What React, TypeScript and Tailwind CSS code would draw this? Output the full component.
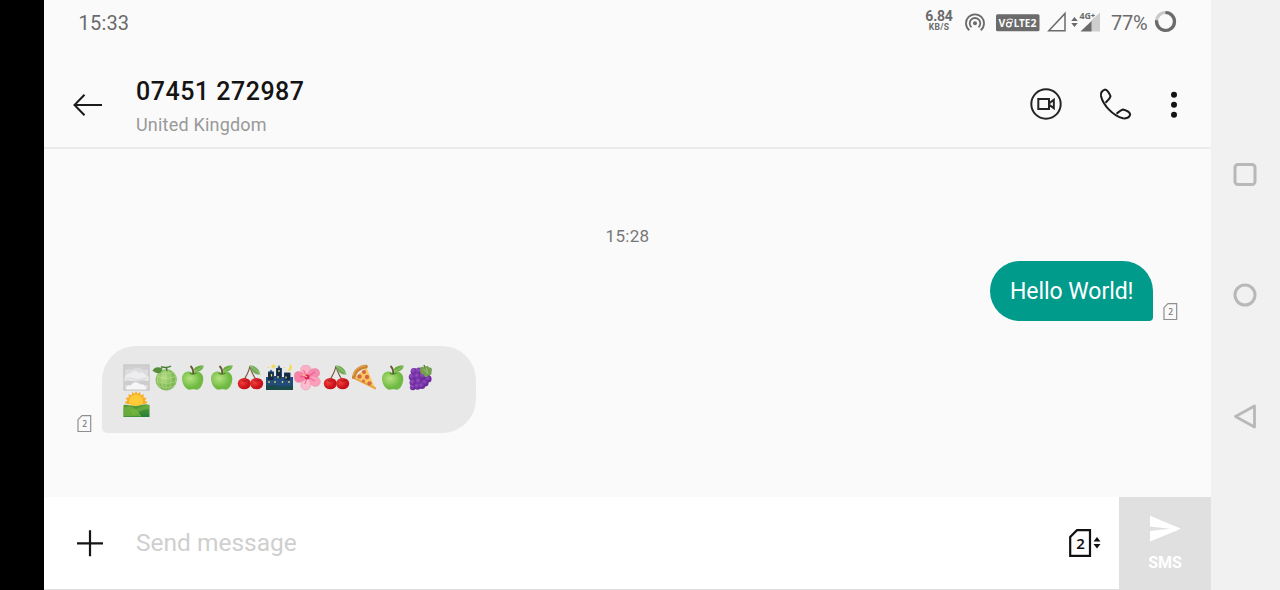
import type { ReactNode } from "react";

type EmojiName = "fog" | "melon" | "apple" | "cherry" | "night" | "flower" | "pizza" | "grapes" | "sunrise";

const message: EmojiName[] = [
  "fog", "melon", "apple", "apple", "cherry", "night", "flower", "cherry", "pizza", "apple", "grapes", "sunrise",
];

const art: Record<EmojiName, ReactNode> = {
  fog: (
    <>
      <rect x="1" y="1" width="25" height="25" fill="#dcdcde" stroke="#b9b9bb" />
      <path d="M1.500 7c3-3 5-1 8-2s6-2 9 0 5 0 7 1V1.500h-24z" fill="#cfcfd1" />
      <path d="M1.500 14c1-4 4-4 6-5 3-3 7-2 8 0 3-1 6 0 7 2l3 2v4c-7 2-15 2-24 1z" fill="#ededee" />
      <path d="M1.500 17c4-2 8 1 12 0s8-1 12 0v4h-24z" fill="#cdcdcf" />
      <path d="M3 25.500c0-4 3-5 5-4 2-4 7-4 9-1 3-1 6 1 6.500 5z" fill="#f6f6f7" />
      <path d="M2 15c4-2 6-1 8 0s8 1 14-1" stroke="#dedee0" strokeWidth="1.500" fill="none" />
    </>
  ),
  melon: (
    <>
      <circle cx="14.200" cy="15.800" r="10.600" fill="url(#melonFill)" />
      <g fill="none" stroke="#d3e9ab" strokeWidth="0.600" opacity="0.650">
        <path d="M14.500 5c-5 5-6 14-2 21M14.500 5c5 5 6 14 2 21M14.500 5c-1 6-1 14 0 21M9 7c-5 5-4 12-1 17M20 7c5 5 4 12 1 17" />
        <path d="M5 12c6 3 13 3 19 0M4 17c7 3 14 3 21 0M7 22c5 2 10 2 15 0M7 8c5 2 10 2 15 0" />
      </g>
      <path d="M9 2.800c3 1 7 1 10-.6M14.500 3l.3 4" stroke="#467f31" strokeWidth="1.500" fill="none" />
      <path d="M.5 7C2 3 6 2.500 10.500 4.500 10 9 7 10 5 9 3.500 9 2.500 7.500.5 7z" fill="#568f3c" />
    </>
  ),
  apple: (
    <>
      <path d="M12 8.500C8 5.800 2 8.500 2 14.500 2 20 6 25.700 9.500 25.700c1.500 0 2-.4 3.500-.4s2 .4 3.500.4c3.800 0 6.800-5.700 6.800-11 0-6.500-7-9-11.300-6.200z" fill="url(#appleFill)" />
      <path d="M9.500 9c2 1.600 4.500 1.600 7 0" stroke="#518a2e" strokeWidth="1.200" fill="none" />
      <path d="M13.200 10c.3-4-.7-6.200-2.700-8" stroke="#665239" strokeWidth="1.800" fill="none" />
      <path d="M13.800 7C13.500 3.200 18 .8 23.700 1.500 23.200 6 19 8.700 13.800 7z" fill="#6cad43" />
      <path d="M14.500 6.600c3-.3 5.500-2.300 8.300-4.200" stroke="#9bd171" strokeWidth="0.800" fill="none" />
    </>
  ),
  cherry: (
    <>
      <path d="M13 2c-1 6-4 10-6 14M13 2c1 6 4 10 6 14" stroke="#79563b" strokeWidth="1.200" fill="none" />
      <path d="M12.500 1.500C17 1 22 4 23.500 10.500 18 11 14 8 12.500 1.500z" fill="#72ac58" />
      <path d="M13 2c4 2 7 5 10 8" stroke="#a3cf87" strokeWidth="0.800" fill="none" />
      <ellipse cx="7.300" cy="19.600" rx="6.500" ry="5.700" fill="url(#cherryFill)" />
      <ellipse cx="19.700" cy="19.600" rx="6.500" ry="5.700" fill="url(#cherryFill)" />
      <path d="M5 16.500c1.500 1 3 1 4.500-.2M17.500 16.500c1.500 1 3 1 4.500-.2" stroke="#9d0d12" strokeWidth="0.800" fill="none" />
    </>
  ),
  night: (
    <>
      <path d="M0 26V13h2V7.500h1.500L5 5.500l1.500 2H8V12h2V4h1.500L13 1l1.500 3H16v9h2V8.500h6.500V13H27v13z" fill="#204b7b" />
      <path d="M2 8.500h5.500V16H2zM10.500 4.500H15V14h-4.500zM18.500 9h5.500v7h-5.500z" fill="#162842" />
      <path d="M0 21c5 1 8-1 12 1s10-1 15 0v4H0z" fill="#1a4a4a" />
      <path d="M5.500 10v2.500M13 6v2M12 12v2M20 12.500v2M3 17v2M16.500 17v2M23 17v2M9 17v2" stroke="#d8dc76" strokeWidth="1.300" />
      <path d="M23.500 0c4 2 3.200 7.200-3 7.500 3-2 4-4 3-7.500z" fill="#f4da45" />
      <path d="m7.500.5.7 1.500 1.600.3-1.600.7-.7 1.500-.7-1.500-1.600-.7L6.800 2zM1.500 3.500h2M17.500 3.500H19" fill="#eed64c" stroke="#eed64c" strokeWidth="0.800" />
    </>
  ),
  flower: (
    <>
      <g stroke="#e6769d" strokeWidth="0.400">
        <path d="M13 13C4 9 6 1 11 1.500c6-1.500 9 6 2 11.500z" fill="#fbb0c5" />
        <path d="M13 13C13 5 22 2 25 6.500c3 6-4 9-12 6.500z" fill="#f58bae" />
        <path d="M13 13c8-3 15 1 13 6.500-3 5.500-11 3-13-6.500z" fill="#fb9fbb" />
        <path d="M13 13c6 6 4 13-1.500 13-7-1-5.500-9 1.500-13z" fill="#fdbccd" />
        <path d="M13 13C7 21 0 19 .5 14-1 6 6 5 13 13z" fill="#f782a7" />
      </g>
      <path d="M13 13 9.500 6M13 13l8-5M13 13l8 4M13 13l-2 7M13 13l-7-.5" stroke="#e63e77" strokeWidth="1.300" opacity="0.550" />
      <circle cx="13" cy="13" r="2.500" fill="#d9205f" />
      <path d="M13 13 8.800 10.500" stroke="#ffc46b" strokeWidth="1.400" />
    </>
  ),
  pizza: (
    <>
      <path d="M4 13 15.500 3.500 24.500 25z" fill="#fbc85f" />
      <path d="M24.800 25.800 3 15l1-1.500 21 10z" fill="#e8a33d" />
      <path d="M1 13.500C1.500 6.500 7.500.8 15 .8c1.800 0 2.500 2.500 1 3.500C9.500 5 5.500 8.500 4.500 13.500c-1 2-3.500 2-3.500 0z" fill="#cc8332" />
      <path d="M2 12C3.500 6 8.500 2.300 14.500 1.800" stroke="#e7ae5c" strokeWidth="1" fill="none" />
      <g fill="#d3674c">
        <circle cx="13" cy="8" r="2.100" /><circle cx="8.500" cy="12.500" r="2.200" />
        <circle cx="16" cy="13" r="2.200" /><circle cx="18.500" cy="19.300" r="2.100" /><circle cx="12.500" cy="17" r="1.400" />
      </g>
    </>
  ),
  grapes: (
    <>
      <path d="M17 6c0-2 0-3-1-5" stroke="#567b35" strokeWidth="1.500" fill="none" />
      <path d="M5 6h12l6 7-3 6-8 5-8 1-2-12z" fill="#68299a" />
      <g fill="url(#grapeFill)">
        <circle cx="6" cy="7.500" r="3.400" /><circle cx="11" cy="7" r="3.500" /><circle cx="20" cy="15" r="3.600" />
        <circle cx="4.300" cy="13" r="3.600" /><circle cx="9.700" cy="12.300" r="3.700" /><circle cx="15.300" cy="12" r="3.700" />
        <circle cx="5" cy="18.500" r="3.500" /><circle cx="11" cy="17.500" r="3.700" /><circle cx="17" cy="19" r="3.600" />
        <circle cx="4.800" cy="23.300" r="2.900" /><circle cx="9.500" cy="22.500" r="3.200" /><circle cx="14" cy="21.700" r="3.200" />
      </g>
      <path d="M12 5c1-3 3-2.500 4-1.500 2-2 4-2 5 0 3 0 3.500 2 2.500 4 .5 3-1 4-3.500 4-1 3-4 2-4-1-3 0-4.500-2.500-4-5.500z" fill="#749f50" />
      <path d="m15.500 5 5 5m-2-6 1 5" stroke="#a6c781" strokeWidth="0.800" />
    </>
  ),
  sunrise: (
    <>
      <path d="m13 0 1.700 3L17 .8l.7 3.400 3.300-1-.7 3.300 3.500.5-2 2.500 3 2-3 1.500H4.500L1.500 11.500l3-2-2-2.500 3.500-.5-.7-3.300 3.300 1L9.300.8 11.500 3z" fill="#f8ab24" />
      <circle cx="13" cy="10.500" r="7" fill="#ffca38" />
      <path d="M.5 14c5-1 7 1 12 1s9-3 14-1v12H.5z" fill="url(#hillFill)" />
      <path d="M.5 17c7-4 13 0 18 8.500H.5z" fill="#74b43f" opacity="0.800" />
      <path d="M7 19c7 0 12-4.500 19.500-5v4C20 18 15 21 11 25z" fill="#78b943" opacity="0.550" />
    </>
  ),
};

function EmojiPaints() {
  return (
    <defs>
      <radialGradient id="melonFill" cx="40%" cy="40%"><stop stopColor="#b5dc83" /><stop offset="1" stopColor="#79b650" /></radialGradient>
      <radialGradient id="appleFill" cx="38%" cy="38%"><stop stopColor="#b6e37f" /><stop offset="1" stopColor="#70ba43" /></radialGradient>
      <radialGradient id="cherryFill" cx="35%" cy="40%"><stop stopColor="#f2413c" /><stop offset="1" stopColor="#c91119" /></radialGradient>
      <radialGradient id="grapeFill" cx="35%" cy="35%"><stop stopColor="#9650c3" /><stop offset="1" stopColor="#6b2a9c" /></radialGradient>
      <linearGradient id="hillFill" x2="0" y2="1"><stop stopColor="#5fa038" /><stop offset="1" stopColor="#267d38" /></linearGradient>
    </defs>
  );
}

function Emoji({ name }: { name: EmojiName }) {
  return (
    <svg className="h-[27px] w-[27px]" viewBox="0 0 27 27">
      <EmojiPaints />
      {art[name]}
    </svg>
  );
}

function SimBadge() {
  return (
    <svg className="h-[18px] w-[15px] shrink-0 font-['Noto_Sans',sans-serif]" viewBox="0 0 15 18" fill="none">
      <path d="M5 .7h8.700v15.800H1V4.700z" stroke="#8f8f8f" strokeWidth="1.200" />
      <text x="7.700" y="12" textAnchor="middle" fontSize="8.500" fontWeight="500" fill="#777">2</text>
    </svg>
  );
}

function StatusBar() {
  return (
    <div className="flex h-[45px] items-center justify-between pl-[34.500px] pr-[34px] text-[#6b6b6b]">
      <span className="text-[20px] leading-6 tracking-[0.200px]">15:33</span>
      <div className="flex items-center">
        <div className="flex w-7 flex-col items-center font-bold">
          <span className="mt-[-3px] text-[14px] leading-[13px] tracking-[-0.200px]">6.84</span>
          <span className="text-[8.500px] leading-[9px] tracking-[0.300px]">KB/S</span>
        </div>
        <svg className="ml-[11.500px] mt-[-2px] h-5 w-5" viewBox="0 0 20 20" fill="none" stroke="#6b6b6b" strokeWidth="1.800">
          <circle cx="10" cy="11.300" r="2" fill="#6b6b6b" stroke="none" />
          <path d="M4.300 18.300A9 9 0 1 1 15.700 18.300M6.500 15.300A5.300 5.300 0 1 1 13.500 15.300" />
        </svg>
        <svg className="ml-[11px] h-[18px] w-[44px] font-['Noto_Sans',sans-serif]" viewBox="0 0 44 18">
          <rect y=".3" width="43.500" height="17" rx="1.500" fill="#6b6b6b" />
          <g fill="#fafafa" fontWeight="700" fontSize="10.500">
            <text x="2.500" y="13">V</text>
            <text x="17.800" y="13" textLength="16.500" lengthAdjust="spacingAndGlyphs">LTE</text>
            <text x="34.600" y="13">2</text>
          </g>
          <circle cx="12.800" cy="10.500" r="2.300" fill="none" stroke="#fafafa" strokeWidth="1.400" />
          <path d="M10.800 6.500c1.500-1.600 4-1.800 6-.5M14.800 9.500l2-2.500" fill="none" stroke="#fafafa" strokeWidth="1.200" />
        </svg>
        <svg className="ml-[6.500px] mt-[-2px] h-[22px] w-[56px] font-['Noto_Sans',sans-serif]" viewBox="0 0 56 22">
          <path d="M2.800 19.800H19V2.500z" fill="none" stroke="#6b6b6b" strokeWidth="1.500" />
          <path d="m28.500 6 3.300 4h-6.600zM28.500 16l3.300-4h-6.600z" fill="#6b6b6b" />
          <path d="m45 9.500 9-8v19h-9z" fill="#cecece" />
          <path d="m34.500 20.500 11-10.500v10.500z" fill="#6b6b6b" />
          <text x="33.500" y="8" fontSize="8.500" fontWeight="700" fill="#6b6b6b" stroke="#fafafa" strokeWidth="2" paintOrder="stroke" textLength="11.500" lengthAdjust="spacingAndGlyphs">4G</text>
          <path d="M45.200 4.500h3.600M47 2.700v3.600" stroke="#6b6b6b" strokeWidth="1.100" />
        </svg>
        <span className="ml-[9px] w-[38px] text-[20px] leading-6 tracking-[-0.200px]">77%</span>
        <svg className="ml-[5px] mt-[-2px] h-[23px] w-[23px]" viewBox="0 0 23 23" fill="none" strokeWidth="3.200">
          <circle cx="11.500" cy="11.500" r="9" stroke="#c9c9c9" />
          <path d="M11.500 2.500a9 9 0 1 1-8.900 7.800" stroke="#6b6b6b" />
        </svg>
      </div>
    </div>
  );
}

function Header() {
  return (
    <header className="flex h-[104px] items-center border-b-2 border-[#ebebeb] pl-7">
      <svg className="mt-[17px] h-[26px] w-[32px]" viewBox="0 0 32 26" fill="none" stroke="#1b1b1b" strokeWidth="2">
        <path d="M30 13H2.500M12.500 2.700 2.500 13l10 10.300" />
      </svg>
      <div className="ml-8 mt-[23px] grow">
        <h1 className="text-[25px] font-medium leading-[30px] tracking-[0.500px] text-[#141414]">07451 272987</h1>
        <p className="mt-1 text-[18px] leading-7 tracking-[0.200px] text-[#999]">United Kingdom</p>
      </div>
      <svg className="mt-[16px] h-[34px] w-[34px]" viewBox="0 0 34 34" fill="none" stroke="#242424" strokeWidth="2">
        <circle cx="17" cy="17" r="14.700" />
        <path d="M9.300 12h10.700v10H9.300zM20.500 16l4.300-3.300v8.600L20.500 18z" />
      </svg>
      <svg className="ml-[35px] mt-[16px] h-[34px] w-[34px]" viewBox="0 0 34 34" fill="none" stroke="#1c1c1c" strokeWidth="2" strokeLinejoin="round">
        <path d="M7.300 2.500C4 3.500 2.500 6 3 9c2 9 12 20 22 22.300 4 .5 6.500-1 7.200-4-.7-2-3.700-4-7.200-4.800-2 .5-4.500 2.500-6.500 4.200M7.300 2.500c1.700 0 4.200 4 5.200 6.700-.5 2.800-3 4.600-5 6.500" />
      </svg>
      <svg className="ml-[38px] mr-[33px] mt-[17px] h-[28px] w-[8px]" viewBox="0 0 8 28" fill="#141414">
        <circle cx="4" cy="3.700" r="3" /><circle cx="4" cy="13.700" r="3" /><circle cx="4" cy="23.700" r="3" />
      </svg>
    </header>
  );
}

function Conversation() {
  return (
    <section className="flex h-[348px] flex-col pt-[75px]">
      <time className="text-center text-[17px] leading-6 tracking-[0.300px] text-[#777]">15:28</time>
      <div className="mt-[13px] flex items-end justify-end pr-[33px]">
        <div className="flex h-[60px] w-[163px] items-center rounded-[30px] rounded-br-[4px] bg-[#009b8b] pl-5 pt-[3px] text-[23px] tracking-[-0.050px] text-white">
          Hello World!
        </div>
        <div className="ml-2.5"><SimBadge /></div>
      </div>
      <div className="mt-[25px] flex items-end pl-[33px]">
        <SimBadge />
        <div className="ml-2.5 flex h-[87px] w-[374px] flex-wrap content-start gap-x-[1.500px] gap-y-[0.500px] rounded-[34px] rounded-bl-[5px] bg-[#e8e8e8] pl-[21px] pr-[40px] pt-[17.500px]">
          {message.map((name, i) => <Emoji key={i} name={name} />)}
        </div>
      </div>
    </section>
  );
}

function Composer() {
  return (
    <footer className="flex h-[93px] border-b border-[#e0e0e0] bg-white">
      <div className="flex grow items-center pl-8">
        <svg className="h-7 w-7" viewBox="0 0 28 28" stroke="#151515" strokeWidth="2.200"><path d="M1 14.300h26M14 1.300v26" /></svg>
        <span className="ml-8 grow text-[24.500px] text-[#cfcfcf]">Send message</span>
        <svg className="mr-[17px] h-[30px] w-[34px] font-['Noto_Sans',sans-serif]" viewBox="0 0 34 30" fill="none">
          <path d="M9 2.200h13v25.600H2.200V9z" stroke="#111" strokeWidth="2.200" />
          <text x="12.500" y="20.700" textAnchor="middle" fontSize="15" fontWeight="600" fill="#111">2</text>
          <path d="m29 9 3.500 4.500h-7zM29 20.500l3.500-4.500h-7z" fill="#111" />
        </svg>
      </div>
      <div className="flex w-[92px] flex-col items-center bg-[#e0e0e0] pt-[18px] text-white">
        <svg className="h-[28px] w-8" viewBox="0 0 32 28" fill="white"><path d="m1 .7 31 13L1 26.500V16l20-2.300L1 11.500z" /></svg>
        <span className="mt-[8px] text-[16px] font-bold leading-6">SMS</span>
      </div>
    </footer>
  );
}

export default function App() {
  return (
    <div className="flex h-[590px] w-[1280px] overflow-hidden bg-black font-['Roboto',sans-serif]">
      <main className="ml-11 flex w-[1167px] flex-col bg-[#fafafa]">
        <StatusBar />
        <Header />
        <Conversation />
        <Composer />
      </main>
      <nav className="flex w-[69px] flex-col items-center gap-[95px] bg-[#f1f1f1] pr-px pt-[161px]">
        <svg className="h-[26px] w-[26px]" viewBox="0 0 26 26" fill="none" stroke="#b8b8b8" strokeWidth="3"><rect x="3" y="3.500" width="20" height="20" rx="3" /></svg>
        <svg className="h-[26px] w-[26px]" viewBox="0 0 26 26" fill="none" stroke="#b8b8b8" strokeWidth="3"><circle cx="13" cy="13" r="10" /></svg>
        <svg className="h-[26px] w-[26px]" viewBox="0 0 26 26" fill="none" stroke="#b8b8b8" strokeWidth="2.800" strokeLinejoin="round"><path d="M3.500 13.500 22.500 3v21z" /></svg>
      </nav>
    </div>
  );
}
